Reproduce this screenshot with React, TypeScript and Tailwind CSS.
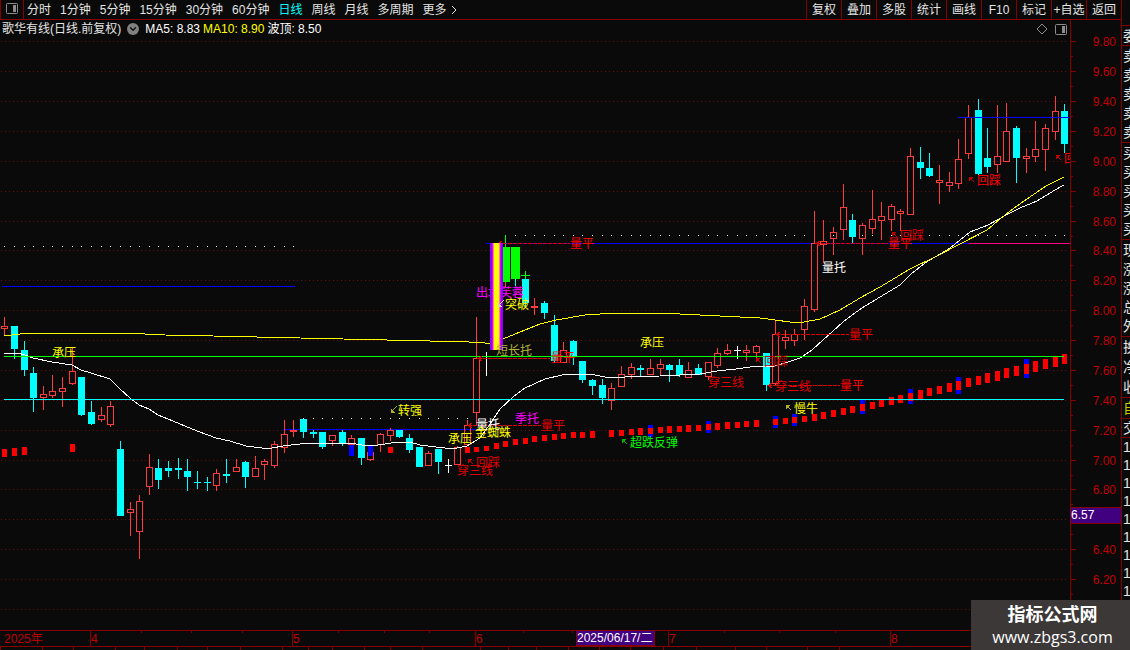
import React from 'react';
import { ChevronDown } from 'lucide-react';

type CandleKind = 'up' | 'down' | 'flat' | 'green';

// slot, high, body top, body bottom, low, kind
type Candle = [number, number, number, number, number, CandleKind];

interface Note {
  x: number;
  y: number;
  text: string;
  color: string;
  arrow?: 'up' | 'down';
  arrowColor?: string;
}

const RED = '#ff3c3c';
const CYAN = '#00ffff';
const LINE = '#870000';

const periods = ['分时', '1分钟', '5分钟', '15分钟', '30分钟', '60分钟', '日线', '周线', '月线', '多周期'];
const tools = ['复权', '叠加', '多股', '统计', '画线', 'F10', '标记', '+自选', '返回'];

const slotX = (slot: number) => Math.round(4.25 + (slot * 1060) / 110);

const candles: Candle[] = [
  [0, 317, 326, 329, 336, 'up'],
  [1, 326, 326, 349, 359, 'down'],
  [2, 341, 350, 370, 376, 'down'],
  [3, 367, 373, 398, 412, 'down'],
  [4, 386, 394, 398, 410, 'up'],
  [5, 375, 391, 396, 398, 'up'],
  [6, 377, 388, 392, 407, 'up'],
  [7, 348, 371, 384, 385, 'up'],
  [8, 377, 377, 415, 416, 'down'],
  [9, 401, 412, 424, 425, 'down'],
  [10, 407, 415, 420, 422, 'up'],
  [11, 401, 406, 425, 427, 'up'],
  [12, 441, 449, 516, 516, 'down'],
  [13, 502, 509, 513, 536, 'up'],
  [14, 495, 501, 532, 559, 'up'],
  [15, 454, 467, 487, 495, 'up'],
  [16, 459, 468, 480, 489, 'down'],
  [17, 461, 468, 471, 477, 'down'],
  [18, 458, 468, 470, 479, 'down'],
  [19, 459, 471, 477, 491, 'down'],
  [20, 471, 482, 483, 489, 'down'],
  [21, 477, 482, 483, 491, 'down'],
  [22, 469, 473, 486, 491, 'up'],
  [23, 459, 474, 476, 483, 'down'],
  [24, 459, 467, 472, 472, 'up'],
  [25, 461, 462, 477, 488, 'down'],
  [26, 456, 468, 477, 477, 'up'],
  [27, 459, 461, 465, 480, 'up'],
  [28, 441, 444, 466, 468, 'up'],
  [29, 420, 434, 448, 453, 'up'],
  [30, 420, 430, 432, 437, 'up'],
  [31, 419, 419, 432, 438, 'down'],
  [32, 430, 432, 434, 438, 'down'],
  [33, 432, 432, 447, 449, 'down'],
  [34, 435, 435, 441, 446, 'up'],
  [35, 430, 432, 444, 446, 'down'],
  [36, 435, 438, 445, 445, 'up'],
  [37, 438, 438, 458, 465, 'down'],
  [38, 452, 452, 460, 461, 'up'],
  [39, 433, 434, 445, 452, 'up'],
  [40, 428, 430, 436, 441, 'up'],
  [41, 430, 430, 437, 438, 'down'],
  [42, 434, 438, 450, 453, 'down'],
  [43, 447, 447, 467, 467, 'down'],
  [44, 451, 453, 466, 466, 'up'],
  [45, 449, 449, 462, 474, 'down'],
  [46, 459, 465, 466, 473, 'flat'],
  [47, 446, 447, 465, 465, 'up'],
  [48, 420, 425, 445, 445, 'up'],
  [49, 317, 358, 413, 425, 'up'],
  [54, 279, 279, 303, 307, 'down'],
  [55, 298, 306, 308, 315, 'up'],
  [56, 301, 303, 313, 319, 'down'],
  [57, 315, 325, 361, 363, 'down'],
  [58, 342, 350, 363, 363, 'up'],
  [59, 340, 341, 356, 365, 'down'],
  [60, 361, 361, 380, 383, 'down'],
  [61, 379, 380, 386, 395, 'down'],
  [62, 379, 385, 398, 404, 'down'],
  [63, 383, 388, 401, 410, 'up'],
  [64, 366, 374, 387, 387, 'up'],
  [65, 363, 367, 375, 379, 'up'],
  [66, 365, 368, 370, 376, 'down'],
  [67, 359, 368, 375, 375, 'up'],
  [68, 359, 364, 369, 376, 'up'],
  [69, 364, 365, 370, 382, 'down'],
  [70, 359, 365, 375, 377, 'down'],
  [71, 362, 370, 378, 378, 'up'],
  [72, 364, 368, 375, 375, 'down'],
  [73, 362, 362, 377, 380, 'up'],
  [74, 348, 353, 366, 368, 'up'],
  [75, 344, 350, 354, 355, 'up'],
  [76, 346, 350, 351, 359, 'flat'],
  [77, 345, 350, 353, 361, 'up'],
  [78, 345, 346, 353, 362, 'up'],
  [79, 353, 353, 385, 391, 'down'],
  [80, 321, 334, 384, 385, 'up'],
  [81, 330, 337, 341, 349, 'up'],
  [82, 329, 334, 341, 346, 'up'],
  [83, 299, 306, 330, 340, 'up'],
  [84, 211, 243, 310, 312, 'up'],
  [85, 220, 241, 245, 263, 'up'],
  [86, 227, 232, 239, 255, 'up'],
  [87, 184, 207, 230, 240, 'up'],
  [88, 214, 220, 237, 243, 'down'],
  [89, 223, 225, 239, 255, 'up'],
  [90, 190, 219, 229, 234, 'up'],
  [91, 202, 216, 221, 240, 'up'],
  [92, 204, 206, 220, 231, 'up'],
  [93, 209, 211, 214, 231, 'up'],
  [94, 148, 156, 215, 215, 'up'],
  [95, 147, 162, 168, 179, 'down'],
  [96, 153, 168, 176, 177, 'down'],
  [97, 165, 180, 183, 204, 'up'],
  [98, 172, 182, 186, 192, 'up'],
  [99, 139, 159, 184, 189, 'up'],
  [100, 105, 117, 154, 159, 'up'],
  [101, 99, 110, 174, 175, 'down'],
  [102, 128, 158, 167, 173, 'down'],
  [103, 105, 156, 165, 173, 'up'],
  [104, 103, 131, 162, 162, 'up'],
  [105, 126, 128, 158, 183, 'down'],
  [106, 148, 156, 159, 173, 'up'],
  [107, 121, 149, 157, 162, 'up'],
  [108, 124, 128, 150, 171, 'up'],
  [109, 96, 111, 132, 140, 'up'],
  [110, 104, 111, 144, 153, 'down'],
];

// slot, top, height of the red trend blocks
const blocks: [number, number, number][] = [
  [0, 449, 8], [1, 448, 8], [2, 447, 8], [7, 444, 8], [40, 447, 6],
  [48, 447, 6], [49, 447, 5], [50, 446, 5], [51, 443, 6], [52, 441, 6], [53, 439, 6],
  [54, 438, 6], [55, 436, 6], [56, 435, 6], [57, 434, 6], [58, 433, 6], [59, 432, 6],
  [60, 432, 6], [61, 431, 7], [63, 430, 7], [64, 430, 6], [65, 429, 6], [66, 428, 7],
  [67, 428, 6], [68, 427, 6], [69, 426, 7], [70, 426, 6], [71, 425, 7], [72, 425, 6],
  [73, 424, 6], [74, 423, 7], [75, 422, 7], [76, 422, 6], [77, 421, 6], [78, 420, 7],
  [80, 419, 6], [81, 418, 6], [82, 417, 6], [83, 416, 6], [84, 414, 7], [85, 412, 7],
  [86, 410, 7], [87, 408, 7], [88, 406, 7], [89, 404, 7], [90, 402, 7], [91, 400, 7],
  [92, 397, 8], [93, 395, 8], [94, 393, 8], [95, 390, 9], [96, 388, 8], [97, 386, 8],
  [98, 383, 9], [99, 381, 9], [100, 378, 9], [101, 376, 9], [102, 373, 10], [103, 371, 10],
  [104, 368, 10], [105, 366, 10], [106, 364, 10], [107, 361, 11], [108, 359, 10],
  [109, 357, 10], [110, 354, 10],
];

const blueBlocks: [number, number, number][] = [
  [36, 445, 11], [38, 445, 11], [67, 425, 12], [73, 421, 12], [80, 416, 12], [82, 414, 12],
  [89, 400, 14], [94, 389, 15], [99, 377, 17], [106, 359, 19],
];

const ma5 =
  '4,353 18,353 25,355 33,358 52,362 72,365 81,370 91,373 110,379 120,389 130,398 139,405 149,409 158,415 168,419 197,431 216,438 230,441 246,446 262,448 272,448 283,446 300,444 330,443 350,443 362,445 378,445 398,442 410,442 420,445 436,447 445,448 457,448 467,446 480,438 490,424 500,409 513,397 525,388 545,379 562,375 580,374 595,375 610,378 625,377 660,376 700,374 717,371 736,369 750,367 775,366 788,362 800,358 812,350 823,340 833,331 843,322 852,315 862,308 880,297 900,285 911,274 925,263 950,248 970,232 988,225 1008,214 1020,208 1037,201 1055,190 1064,185';
const ma10 =
  '4,336 20,334 48,333 125,333 165,335 213,336 300,338 430,341 453,341 485,343 492,343 503,339 520,332 540,324 556,320 585,315 615,313 660,313 700,315 760,318 775,320 790,322 804,322 820,319 840,310 860,298 880,287 900,275 910,269 935,257 960,244 987,230 1000,219 1010,211 1024,201 1046,186 1064,177';

const dashes = [
  [498, 243, 570],
  [478, 358, 550],
  [468, 425, 541],
  [776, 334, 849],
  [768, 385, 840],
  [816, 243, 888],
];

const notes: Note[] = [
  { x: 52, y: 352, text: '承压', color: '#ffff00' },
  { x: 398, y: 410, text: '转强', color: '#ffff00', arrow: 'down', arrowColor: '#b0b020' },
  { x: 448, y: 438, text: '承压', color: '#ffff00' },
  { x: 476, y: 292, text: '出水芙蓉', color: '#ff00ff' },
  { x: 496, y: 350, text: '短长托', color: '#b4b43c' },
  { x: 570, y: 243, text: '量平', color: '#ff0000' },
  { x: 551, y: 357, text: '量平', color: '#ff0000' },
  { x: 476, y: 424, text: '量托', color: '#ffffff' },
  { x: 475, y: 432, text: '金蜘蛛', color: '#ffff00' },
  { x: 515, y: 418, text: '季托', color: '#ff00ff' },
  { x: 541, y: 425, text: '量平', color: '#e00000' },
  { x: 476, y: 462, text: '回踩', color: '#e00000', arrow: 'up', arrowColor: '#c00000' },
  { x: 457, y: 470, text: '穿三线', color: '#e00000' },
  { x: 630, y: 442, text: '超跌反弹', color: '#00ff00', arrow: 'up', arrowColor: '#00b400' },
  { x: 640, y: 342, text: '承压', color: '#ffff00' },
  { x: 708, y: 382, text: '穿三线', color: '#e00000' },
  { x: 764, y: 361, text: '回踩', color: '#c80000', arrow: 'up', arrowColor: '#c00000' },
  { x: 775, y: 386, text: '穿三线', color: '#e00000' },
  { x: 794, y: 408, text: '慢牛', color: '#ffff00', arrow: 'up', arrowColor: '#b0b020' },
  { x: 840, y: 385, text: '量平', color: '#ff0000' },
  { x: 849, y: 334, text: '量平', color: '#e00000' },
  { x: 888, y: 243, text: '量平', color: '#ff0000' },
  { x: 900, y: 235, text: '回踩', color: '#e00000', arrow: 'up', arrowColor: '#c00000' },
  { x: 977, y: 180, text: '回踩', color: '#ff0000', arrow: 'up', arrowColor: '#c00000' },
  { x: 1064, y: 158, text: '回踩', color: '#ff0000', arrow: 'up', arrowColor: '#c00000' },
  { x: 822, y: 267, text: '量托', color: '#ffffff' },
];

const months = [
  { x: 91, label: '4' },
  { x: 293, label: '5' },
  { x: 476, label: '6' },
  { x: 669, label: '7' },
  { x: 891, label: '8' },
];
const weekTicks = [141, 191, 242, 338, 384, 429, 523, 572, 724, 779, 835];

const quoteRows = [
  { cls: 'h-[20px]', rows: ['委比'] },
  { cls: 'h-[97px]', rows: ['卖五', '卖四', '卖三', '卖二', '卖一'] },
  { cls: 'h-[97px]', rows: ['买一', '买二', '买三', '买四', '买五'] },
  { cls: 'h-[97px]', rows: ['现价', '涨跌', '涨幅', '总量', '外盘'] },
  { cls: 'h-[61px]', rows: ['换手', '净资', '收益'] },
  { cls: 'h-[21px] text-[#c8c800]', rows: ['自动'] },
  { cls: 'h-[19px]', rows: ['交易'] },
];

const footerCells = [
  'w-[42px]', 'w-[31px]', 'w-[42px]', 'w-[29px]', 'w-[33px]', 'w-[30px]', 'w-[33px]', 'w-[42px]', 'w-[26px]',
  'w-[24px]', 'w-[32px]', 'w-[26px]', 'w-[32px]', 'w-[58px]', 'w-[28px]', 'w-[28px]', 'w-[32px]', 'w-[31px]',
  'w-[31px]', 'w-[33px]', 'w-[33px]', 'w-[39px]', 'w-[31px]', 'w-[41px]', 'w-[32px]', 'w-[32px]',
];

const PanelIcon = ({ className }: { className?: string }) => (
  <svg width="12" height="11" viewBox="0 0 12 11" className={className}>
    <rect x="0.5" y="0.5" width="11" height="10" rx="1" fill="none" stroke="currentColor" />
    <rect x="7" y="2" width="3" height="7" fill="currentColor" />
  </svg>
);

const CandleBar = ({ candle }: { candle: Candle }) => {
  const [slot, high, top, bottom, low, kind] = candle;
  const x = slotX(slot);
  const color = kind === 'up' ? RED : kind === 'flat' ? '#ffffff' : CYAN;
  return (
    <g>
      {high < top && <rect x={x} y={high} width={1} height={top - high} fill={color} />}
      {low > bottom && <rect x={x} y={bottom} width={1} height={low - bottom} fill={color} />}
      {kind === 'up' && bottom - top > 2 ? (
        <rect x={x - 2.5} y={top + 0.5} width={6} height={bottom - top - 1} fill="none" stroke={color} />
      ) : (
        <rect x={x - 3} y={top} width={7} height={bottom - top} fill={color} />
      )}
    </g>
  );
};

const dotRow = (from: number, to: number, y: number) =>
  Array.from({ length: to - from + 1 }, (_, i) => (
    <rect key={`${y}-${i}`} x={slotX(from + i)} y={y} width={1} height={1} fill="#ffffff" />
  ));

const NoteLabel = ({ note }: { note: Note }) => {
  const { x, y, text, color, arrow, arrowColor } = note;
  return (
    <g>
      {arrow === 'up' && (
        <g stroke={arrowColor} fill={arrowColor}>
          <path d={`M${x - 2.5} ${y + 2.5}l-4 -4`} />
          <path d={`M${x - 8} ${y - 3}h4l-4 4z`} stroke="none" />
        </g>
      )}
      {arrow === 'down' && (
        <g stroke={arrowColor} fill={arrowColor}>
          <path d={`M${x - 1.5} ${y - 3.5}l-4 4`} />
          <path d={`M${x - 7} ${y + 3}h4l-4 -4z`} stroke="none" />
        </g>
      )}
      <text x={x} y={y + 5} fill={color}>
        {text}
      </text>
    </g>
  );
};

const KLineChart = () => {
  const gridLines = Array.from({ length: 20 }, (_, i) => Math.round(41.4 + i * 29.87));

  return (
    <svg
      viewBox="0 20 1121 627"
      className="block h-auto w-full font-['Liberation_Sans','Noto_Sans_CJK_SC',sans-serif] text-[12px]"
      shapeRendering="crispEdges"
    >
      <defs>
        <clipPath id="plot">
          <rect x="0" y="20" width="1070" height="610" />
        </clipPath>
      </defs>

      {/* Grid */}
      {gridLines.map((y) => (
        <line key={y} x1="1" x2="1068" y1={y + 0.5} y2={y + 0.5} stroke="#641010" strokeDasharray="1 3" />
      ))}

      <g clipPath="url(#plot)">
        {/* Support and resistance levels */}
        <rect x="2" y="286" width="293" height="1" fill="#0000ff" />
        <rect x="283" y="429" width="193" height="1" fill="#0000ff" />
        <rect x="486" y="243" width="483" height="1" fill="#0000ff" />
        <rect x="969" y="243" width="101" height="1" fill="#ff0080" />
        {dotRow(0, 30, 246)}
        {dotRow(31, 48, 418)}
        {dotRow(52, 110, 235)}

        {candles.map((candle) => (
          <CandleBar key={candle[0]} candle={candle} />
        ))}
        <rect x="958" y="117" width="112" height="1" fill="#0000ff" />
        <rect x="486" y="352" width="1" height="24" fill="#ffffff" />

        {/* Limit-up surge bar */}
        <rect x="505" y="235" width="1" height="12" fill="#00ff00" />
        <rect x="505" y="282" width="1" height="5" fill={RED} />
        <rect x="502" y="247" width="8" height="35" fill="#00ff00" />
        <rect x="515" y="279" width="1" height="7" fill={CYAN} />
        <rect x="511" y="247" width="9" height="32" fill="#00ff00" />
        <rect x="521" y="275" width="9" height="1" fill="#00ff00" />
        <rect x="525" y="271" width="1" height="8" fill="#00ff00" />

        {blueBlocks.map(([slot, y, h]) => (
          <rect key={slot} x={slotX(slot) - 2} y={y} width={5} height={h} fill="#0000ff" />
        ))}
        {blocks.map(([slot, y, h]) => (
          <rect key={slot} x={slotX(slot) - 2} y={y} width={5} height={h} fill="#ff0000" />
        ))}

        <polyline points={ma5} fill="none" stroke="#ffffff" />
        <polyline points={ma10} fill="none" stroke="#ffff00" />
        <rect x="4" y="356" width="1060" height="1" fill="#00ff00" />
        <rect x="4" y="399" width="1060" height="1" fill="#00ffff" />

        {dashes.map(([x1, y, x2]) => (
          <g key={`${x1}-${y}`} stroke="#e00000" fill="none">
            <line x1={x1} x2={x2} y1={y + 0.5} y2={y + 0.5} strokeDasharray="4 1" />
            <path d={`M${x1 + 4} ${y - 2}l-4 2.5l4 2.5`} />
          </g>
        ))}

        {notes.slice(0, 4).map((note) => (
          <NoteLabel key={`${note.x}-${note.y}`} note={note} />
        ))}
        <rect x="490" y="243" width="13" height="107" fill="#8c00ff" />
        <rect x="492" y="243" width="9" height="107" fill="#e600ff" />
        <rect x="493" y="243" width="7" height="107" fill="#ff8080" />
        <rect x="494" y="243" width="5" height="107" fill="#ffff00" />
        <NoteLabel
          note={{ x: 505, y: 304, text: '突破', color: '#ffff00', arrow: 'down', arrowColor: '#d8d8a0' }}
        />
        {notes.slice(4).map((note) => (
          <NoteLabel key={`${note.x}-${note.y}`} note={note} />
        ))}
      </g>

      {/* Price axis */}
      <rect x="1070" y="20" width="1" height="610" fill={LINE} />
      {gridLines.map((y, i) => (
        <g key={y}>
          <rect x="1071" y={y} width="5" height="1" fill={LINE} />
          <rect x="1071" y={y + 15} width="2" height="1" fill={LINE} />
          {i !== 16 && i < 19 && (
            <text x="1116" y={y + 5} textAnchor="end" fill="#c00000">
              {(9.8 - i * 0.2).toFixed(2)}
            </text>
          )}
        </g>
      ))}
      <rect x="1070" y="507" width="51" height="17" fill={LINE} />
      <rect x="1071" y="508" width="50" height="15" fill="#400080" />
      <text x="1071" y="519" fill="#ffffff">
        6.57
      </text>

      {/* Time axis */}
      <rect x="0" y="630" width="1121" height="1" fill={LINE} />
      <rect x="0" y="646" width="1121" height="1" fill={LINE} />
      <text x="4" y="643" fill="#c00000">
        2025年
      </text>
      {months.map((month) => (
        <g key={month.label}>
          <rect x={month.x - 1} y="630" width="1" height="16" fill={LINE} />
          <text x={month.x} y="643" fill="#c00000">
            {month.label}
          </text>
        </g>
      ))}
      {weekTicks.map((x) => (
        <rect key={x} x={x} y="630" width="1" height="3" fill={LINE} />
      ))}
      <rect x="576" y="630" width="79" height="16" fill={LINE} />
      <rect x="577" y="631" width="77" height="14" fill="#400080" />
      <text x="577" y="642" fill="#ffffff">
        2025/06/17/二
      </text>
    </svg>
  );
};

const Toolbar = () => (
  <header className="flex h-5 items-stretch justify-between border-b border-[#870000] text-[#e4e4e4]">
    <div className="flex">
      <button type="button" aria-label="panel" className="flex w-6 items-start justify-center border-x border-[#870000] pt-[3px] text-[#8c8c8c]">
        <PanelIcon />
      </button>
      <nav className="flex items-center gap-[9px] pl-[3px]">
        {periods.map((period) => (
          <button key={period} type="button" className={period === '日线' ? 'text-[#00ffff]' : ''}>
            {period}
          </button>
        ))}
        <button type="button" className="flex items-center gap-1">
          更多
          <svg width="6" height="10" viewBox="0 0 6 10">
            <path d="M1 1L5 5L1 9" fill="none" stroke="currentColor" />
          </svg>
        </button>
      </nav>
    </div>
    <div className="flex">
      {tools.map((tool) => (
        <button key={tool} type="button" className="w-[35px] border-l border-[#870000] text-center whitespace-nowrap">
          {tool}
        </button>
      ))}
    </div>
  </header>
);

const InfoBar = () => (
  <div className="absolute top-0 right-[54px] left-0 flex h-[18px] items-center justify-between pl-[2px]">
    <div className="flex items-center gap-[3px] text-white">
      <h1 className="text-[#e4e4e4]">歌华有线(日线.前复权)</h1>
      <button type="button" aria-label="indicator" className="mx-[3px] flex h-3 w-3 items-center justify-center rounded-full bg-[#808080] text-[#0a0a0a]">
        <ChevronDown className="h-[10px] w-[10px]" strokeWidth={3} />
      </button>
      <span>MA5: 8.83</span>
      <span className="text-[#ffff00]">MA10: 8.90</span>
      <span>波顶: 8.50</span>
    </div>
    <div className="flex items-center gap-[7px] text-[#8c8c8c]">
      <svg width="12" height="12" viewBox="0 0 12 12">
        <path d="M6 1L11 6L6 11L1 6Z" fill="none" stroke="currentColor" />
      </svg>
      <PanelIcon />
    </div>
  </div>
);

// Only the leading edge of the quote panel is visible beside the chart
const QuotePanel = () => (
  <aside className="w-[9px] shrink-0 overflow-hidden border-l border-[#870000] pt-[25px] text-[14px] leading-none whitespace-nowrap text-[#e4e4e4]">
    {quoteRows.map((group) => (
      <div key={group.rows[0]} className={`flex flex-col justify-around border-t border-[#870000] pl-px ${group.cls}`}>
        {group.rows.map((row) => (
          <span key={row}>{row}</span>
        ))}
      </div>
    ))}
    <div className="border-t border-[#870000] pl-px leading-[18px]">
      {Array.from({ length: 9 }, (_, i) => (
        <div key={i}>1</div>
      ))}
    </div>
  </aside>
);

const App: React.FC = () => {
  return (
    <div className="relative flex h-screen overflow-hidden bg-[#0a0a0a] font-['Liberation_Sans','Noto_Sans_CJK_SC',sans-serif] text-[12px] leading-[18px]">
      <main className="min-w-0 flex-1">
        <Toolbar />
        <div className="relative">
          <KLineChart />
          <InfoBar />
        </div>
        <div className="flex h-1">
          {footerCells.map((cell, i) => (
            <div key={i} className={`shrink-0 border-l border-[#870000] ${cell}`} />
          ))}
        </div>
      </main>
      <QuotePanel />

      {/* Site badge */}
      <div className="absolute right-0 bottom-0 flex h-[50px] w-[159px] flex-col items-center justify-center bg-[#3c3838] pl-1 text-white">
        <strong className="text-[18px] leading-6">指标公式网</strong>
        <span className="font-['Open_Sans',sans-serif] text-[16px] leading-5">www.zbgs3.com</span>
      </div>
    </div>
  );
};

export default App;
